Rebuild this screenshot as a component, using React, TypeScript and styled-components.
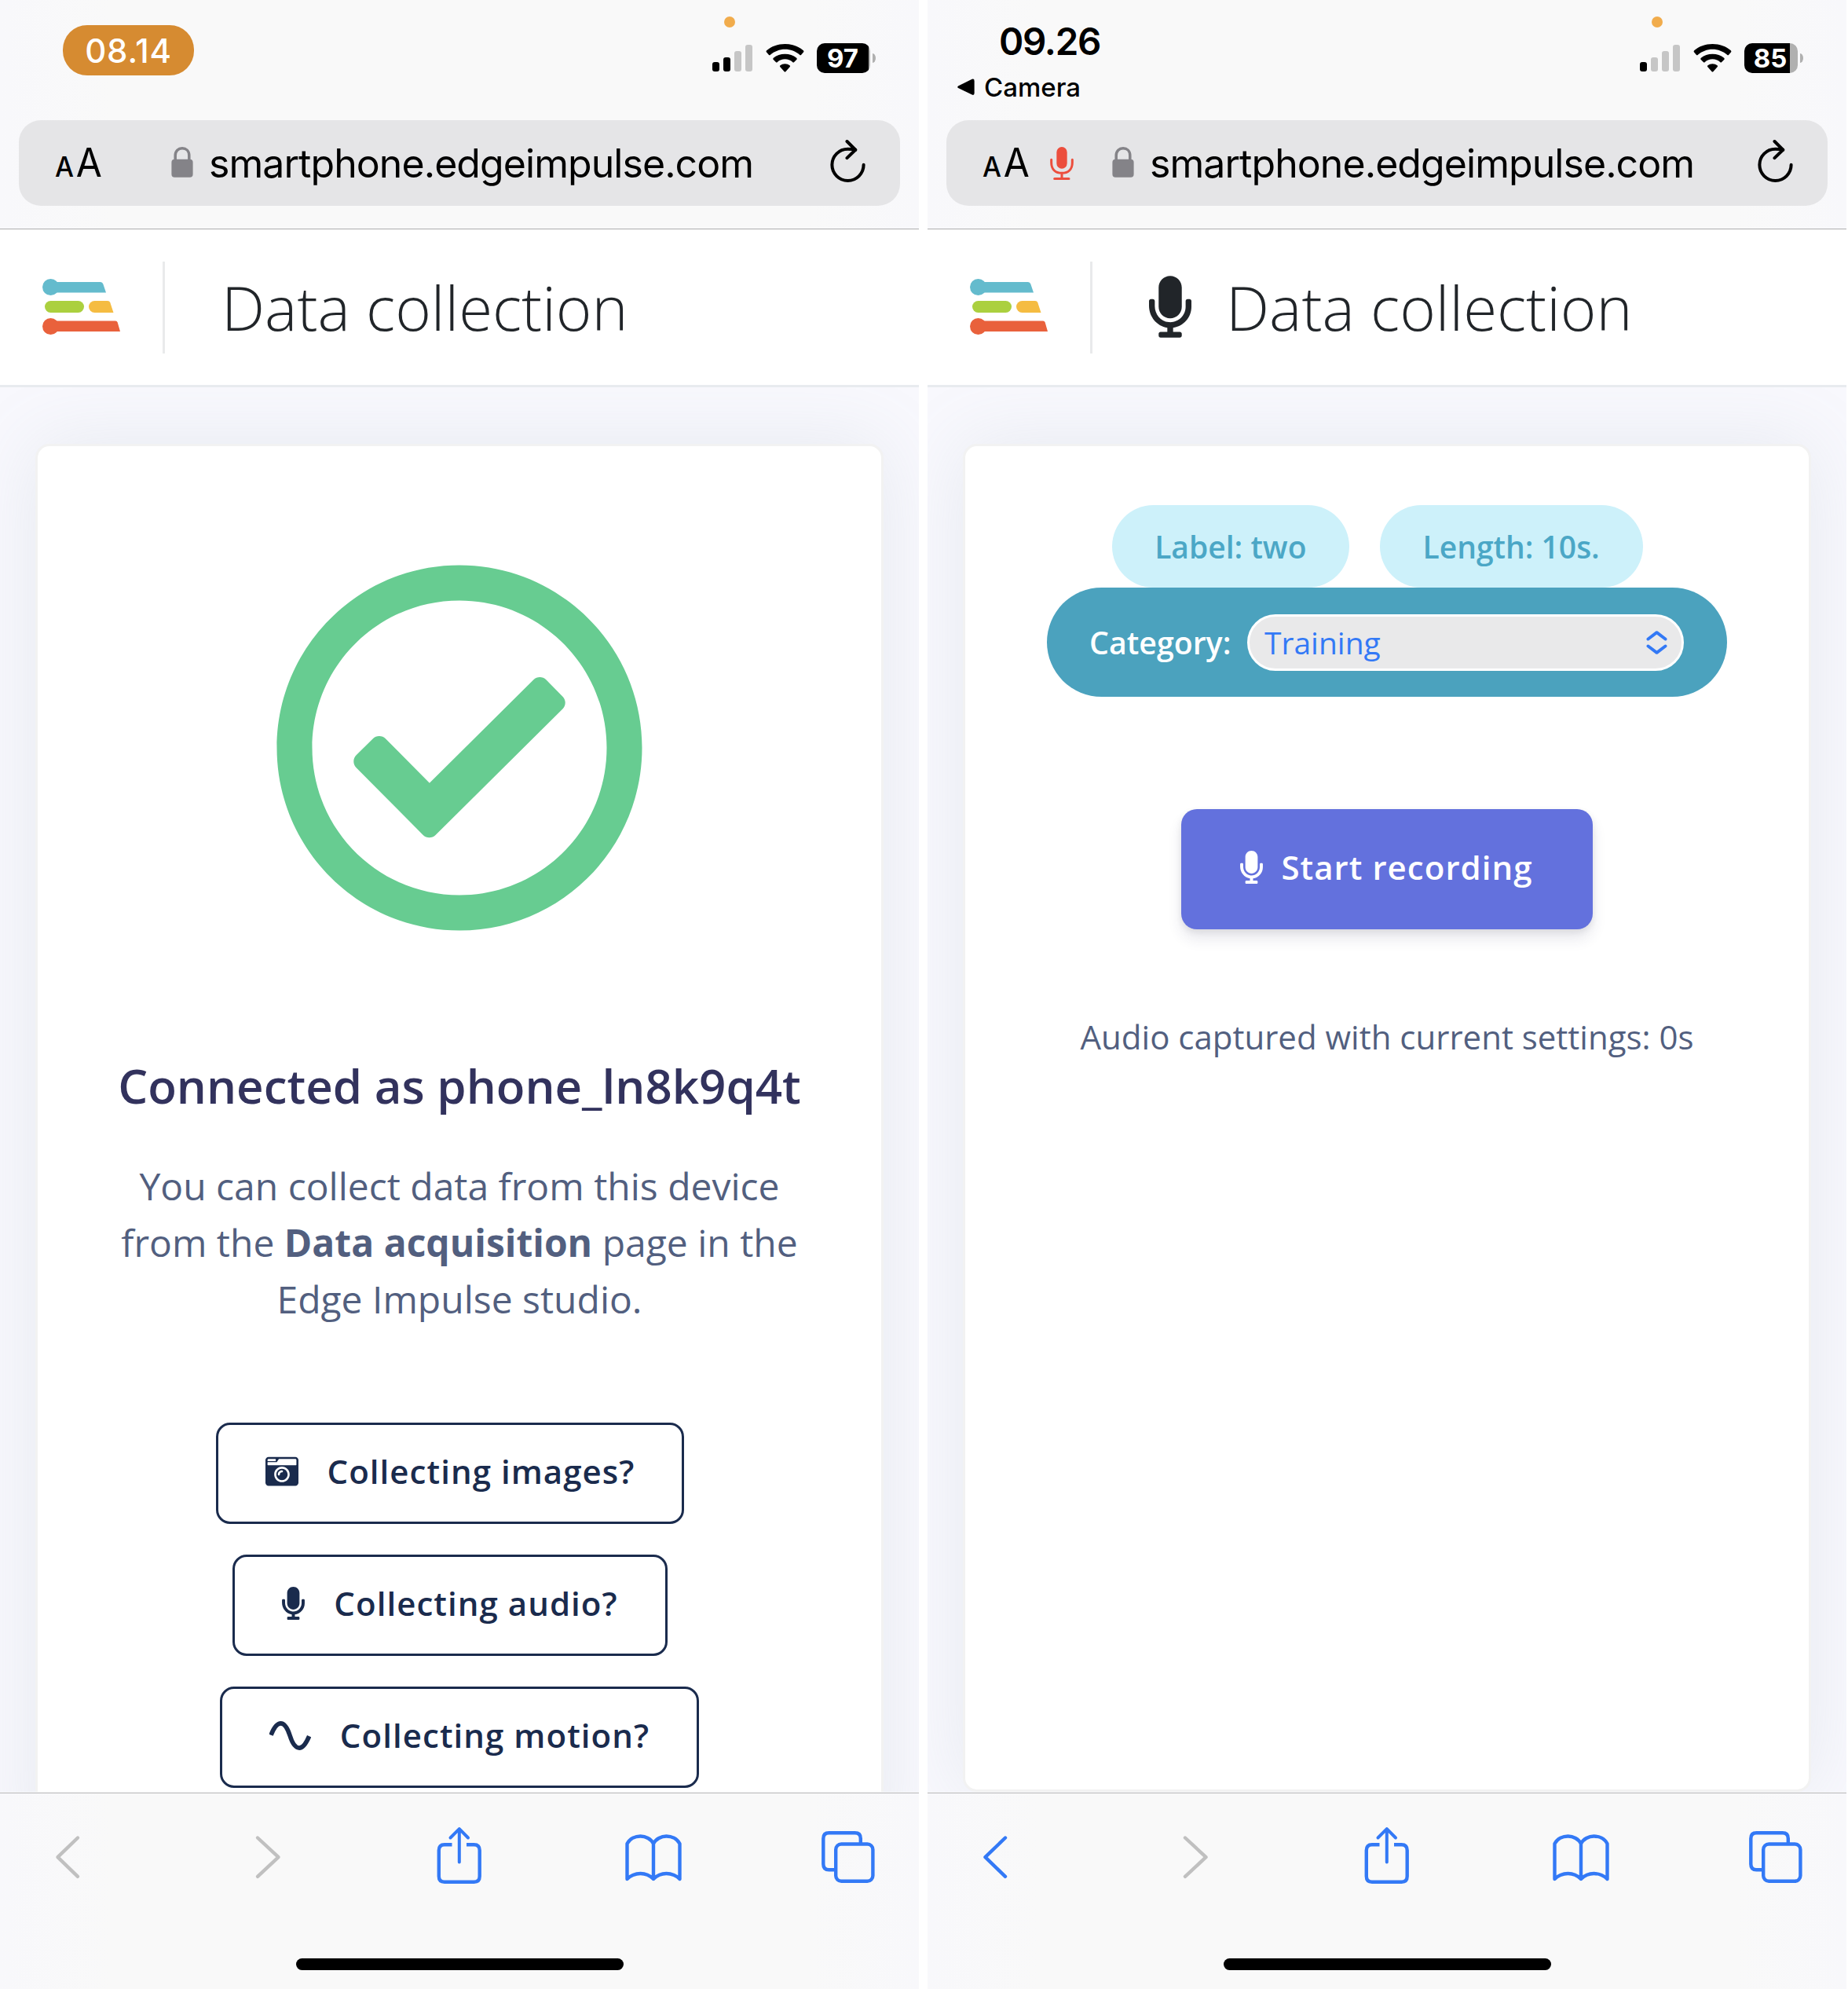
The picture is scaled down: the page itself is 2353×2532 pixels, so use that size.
import React from "react";
import styled, { createGlobalStyle } from "styled-components";
import { FaCameraRetro, FaMicrophone, FaRegCheckCircle } from "react-icons/fa";

const SYSTEM = `Inter, "Liberation Sans", sans-serif`;
const WEB = `"Open Sans", "Noto Sans", sans-serif`;
const BLUE = "#3379f6";
const NAVY = "#1a2b4d";

const GlobalStyle = createGlobalStyle`
  * { box-sizing: border-box; }
  body { margin: 0; background: #fff; }
  svg { display: block; flex: none; }
`;

const Screens = styled.div`
  display: flex;
  gap: 11px;
  width: 2353px;
  height: 2532px;
  overflow: hidden;
  background: #fff;
`;

const Phone = styled.section`
  display: flex;
  flex-direction: column;
  width: 1170px;
  height: 2532px;
  flex: none;
  overflow: hidden;
  background: linear-gradient(90deg, #f8f8fb 0, #f9f9f9 12%, #f9f9f9 88%, #f8f8fb 100%);
`;

/* ---------- browser chrome, top ---------- */

const TopChrome = styled.header`
  height: 292px;
  flex: none;
  padding: 0 24px;
  border-bottom: 1px solid #adadaf;
  font-family: ${SYSTEM};
  color: #000;
`;

const StatusBar = styled.div`
  display: flex;
  justify-content: space-between;
  height: 153px;
  padding: 0 31px 0 14px;
`;

const ClockPill = styled.div`
  display: flex;
  align-items: center;
  justify-content: center;
  width: 167px;
  height: 64px;
  margin: 32px 0 0 42px;
  border-radius: 31px;
  background: #d68b31;
  color: #fff;
  font-size: 42px;
  font-weight: 500;
  letter-spacing: 0.8px;
`;

const ClockColumn = styled.div`
  display: flex;
  flex-direction: column;
  padding-top: 23px;
`;

const Clock = styled.div`
  margin-left: 53px;
  font-size: 47.5px;
  font-weight: 600;
  line-height: 60px;
  letter-spacing: -1.3px;
`;

const BackToApp = styled.div`
  display: flex;
  align-items: center;
  gap: 12px;
  margin-top: 8px;
  font-size: 33px;
  font-weight: 500;
  line-height: 40px;
`;

const Indicators = styled.div`
  padding-top: 21px;
`;

const PrivacyDot = styled.div`
  width: 14px;
  height: 14px;
  margin-left: 15px;
  border-radius: 50%;
  background: #f1ac4c;
`;

const IndicatorRow = styled.div`
  display: flex;
  align-items: center;
  height: 38px;
  margin-top: 20px;
`;

const SignalBars = styled.div`
  display: flex;
  align-items: flex-end;
  gap: 5px;
  height: 34px;
  margin-right: 17px;
`;

const SignalBar = styled.i<{ $height: number; $on: boolean }>`
  width: 9px;
  height: ${(p) => p.$height}px;
  border-radius: 3px;
  background: ${(p) => (p.$on ? "#000" : "#c6c6c6")};
`;

const Battery = styled.div<{ $fill: number }>`
  display: flex;
  align-items: center;
  justify-content: center;
  width: 68px;
  height: 38px;
  margin-left: 16px;
  padding-right: 2px;
  border-radius: 10px;
  background: linear-gradient(90deg, #000 ${(p) => p.$fill}%, #b0b0b0 ${(p) => p.$fill}%);
  color: #fff;
  font-size: 33px;
  font-weight: 700;
  line-height: 38px;
`;

const BatteryTip = styled.div`
  width: 4px;
  height: 12px;
  margin-left: 3px;
  border-radius: 0 4px 4px 0 / 0 6px 6px 0;
  background: #b0b0b0;
`;

const AddressBar = styled.div`
  display: flex;
  align-items: center;
  height: 109px;
  padding: 0 44px 0 46px;
  border-radius: 28px;
  background: #e5e5e7;
`;

const TextSize = styled.div`
  display: flex;
  align-items: baseline;
  gap: 3px;
  width: 62px;
  padding-top: 4px;
  transform: scaleX(0.94);
  transform-origin: left;
  font-size: 51px;
  line-height: 60px;
`;

const SmallA = styled.span`
  font-size: 36px;
  font-weight: 500;
`;

const MicSlot = styled.div`
  margin-left: 24px;
`;

const Site = styled.div<{ $offset: number }>`
  display: flex;
  align-items: center;
  gap: 20px;
  flex: 1;
  margin-left: ${(p) => p.$offset}px;
  font-size: 50px;
  line-height: 60px;
  letter-spacing: -0.94px;
  white-space: nowrap;
`;

const LockSlot = styled.div`
  margin-top: -3px;
`;

const ReloadSlot = styled.div`
  margin-top: -5px;
`;

/* ---------- web page ---------- */

const PageHeader = styled.div`
  display: flex;
  align-items: center;
  height: 201px;
  flex: none;
  padding: 0 0 1px 54px;
  border-bottom: 3px solid #e8ebef;
  background: #fff;
`;

const HeaderRule = styled.div`
  width: 3px;
  height: 117px;
  margin: 1px 0 0 54px;
  background: #e9eaeb;
`;

const PageTitle = styled.h1`
  display: flex;
  align-items: center;
  gap: 44px;
  margin: 0 0 0 72px;
  font-family: ${WEB};
  font-size: 78px;
  font-weight: 300;
  line-height: 106px;
  color: #212529;
  white-space: nowrap;
`;

const MicGlyph = styled(FaMicrophone)<{ $height: number }>`
  width: ${(p) => Math.round(p.$height * 0.6875)}px;
  height: ${(p) => p.$height}px;
`;

const PageBody = styled.main`
  height: 1789px;
  flex: none;
  padding: 72px 45px 0;
  overflow: hidden;
  border-bottom: 1px solid #f7f7f8;
  background: #f8f8fd;
`;

const Card = styled.div<{ $height: number }>`
  display: flex;
  flex-direction: column;
  align-items: center;
  height: ${(p) => p.$height}px;
  border: 3px solid rgba(0, 0, 0, 0.05);
  border-radius: 18px;
  background: #fff;
  box-shadow: 0 0 96px 0 rgba(136, 152, 170, 0.15);
  font-family: ${WEB};
`;

const SuccessMark = styled.div`
  margin-top: 144px;
  color: #67cc91;
`;

const DeviceName = styled.h2`
  margin: 149px 0 0;
  font-size: 60px;
  font-weight: 600;
  line-height: 82px;
  color: #32325d;
  white-space: nowrap;
`;

const Lead = styled.p`
  margin: 51px 0 0;
  font-size: 48px;
  line-height: 72px;
  text-align: center;
  color: #525f7f;
  white-space: nowrap;

  b { font-weight: 700; }
`;

const CollectList = styled.div`
  display: flex;
  flex-direction: column;
  align-items: center;
  gap: 39px;
  margin-top: 121px;
`;

const ButtonText = styled.span`
  margin-top: -2px;
`;

const OutlineButton = styled.button<{ $trailing?: boolean }>`
  display: flex;
  align-items: center;
  gap: 37px;
  height: 129px;
  margin: 0 ${(p) => (p.$trailing ? 24 : 0)}px 0 0;
  padding: 0 60px 5px;
  border: 3px solid ${NAVY};
  border-radius: 18px;
  background: #fff;
  color: ${NAVY};
  font: 600 42px/63px ${WEB};
  letter-spacing: 1.05px;
  white-space: nowrap;
`;

const PillRow = styled.div`
  display: flex;
  gap: 39px;
  margin: 75px 24px 0 0;
`;

const Pill = styled.div`
  display: flex;
  align-items: center;
  height: 105px;
  padding: 0 55px 0 54px;
  border-radius: 53px;
  background: #cdf1fa;
  color: #4ba7c6;
  font-size: 39px;
  font-weight: 600;
  white-space: nowrap;
`;

const CategoryBar = styled.label`
  display: flex;
  align-items: center;
  justify-content: space-between;
  width: 866px;
  height: 139px;
  padding: 0 55px 0 54px;
  border-radius: 70px;
  background: #4ba2be;
  color: #fff;
  font-size: 39.3px;
  font-weight: 600;
`;

const Picker = styled.div`
  display: flex;
  align-items: center;
  justify-content: space-between;
  width: 556px;
  height: 72px;
  padding: 0 18px 0 19px;
  border: 3px solid #fff;
  border-radius: 36px;
  background: #e9e9ea;
  color: ${BLUE};
  font-size: 39px;
  font-weight: 400;
`;

const RecordButton = styled.button`
  display: flex;
  align-items: center;
  gap: 23px;
  height: 153px;
  margin: 143px 0 0;
  padding: 0 76px 5px 75px;
  border: 0;
  border-radius: 20px;
  background: #6371dd;
  box-shadow: 0 12px 18px rgba(50, 50, 93, 0.11), 0 3px 9px rgba(0, 0, 0, 0.08);
  color: #fff;
  font: 600 42px/63px ${WEB};
  letter-spacing: 1.05px;
  white-space: nowrap;
`;

const Captured = styled.p`
  margin: 105px 0 0;
  font-size: 42px;
  line-height: 63px;
  color: #525f7f;
  white-space: nowrap;
`;

/* ---------- browser chrome, bottom ---------- */

const BottomChrome = styled.footer`
  display: flex;
  flex-direction: column;
  align-items: center;
  flex: 1;
  border-top: 1px solid #b9b9bb;
`;

const Toolbar = styled.nav`
  display: grid;
  grid-template-columns: 172px 337px 152px 342px 154px;
  justify-items: center;
  align-items: center;
  width: 100%;
  height: 164px;
`;

const HomeBar = styled.div`
  width: 417px;
  height: 15px;
  margin-top: 46px;
  border-radius: 8px;
  background: #000;
`;

/* ---------- drawings ---------- */

const ToolIcon = ({ muted, children }: { muted?: boolean; children: React.ReactNode }) => (
  <svg
    width="84"
    height="84"
    viewBox="0 0 84 84"
    fill="none"
    stroke={muted ? "#c0c0c0" : BLUE}
    strokeWidth="4.4"
    strokeLinecap="round"
    strokeLinejoin="round"
  >
    {children}
  </svg>
);

const Wifi = () => (
  <svg width="49" height="36" viewBox="0 0 146 108">
    <path
      d="M2 31 Q0 28 3 25 C21 9 46 0 73 0 S125 9 143 25 Q146 28 144 31 L135 41 Q132 44 129 41 C114 28 94 20 73 20 S32 28 17 41 Q14 44 11 41 Z"
    />
    <path d="M28 59 Q26 56 29 53 C41 43 56 38 73 38 S105 43 117 53 Q120 56 118 59 L108 69 Q105 72 102 69 C94 62 84 58 73 58 S52 62 44 69 Q41 72 38 69 Z" />
    <path d="M54 87 Q52 84 55 82 C60 78 66 76 73 76 S86 78 91 82 Q94 84 92 87 L76 105 Q73 108 70 105 Z" />
  </svg>
);

const BackTriangle = () => (
  <svg width="22" height="22" viewBox="0 0 22 22">
    <path d="M1 9.4 L18.6 0.8 Q21.6 -0.2 21.6 3 V18.6 Q21.6 21.8 18.6 20.6 L1 12 Q-0.6 10.7 1 9.4Z" />
  </svg>
);

const Lock = () => (
  <svg width="28" height="39" viewBox="0 0 28 39">
    <path d="M5.2 17V11C5.2 5 9 1.8 14 1.8S22.8 5 22.8 11V17" fill="none" stroke="#848388" strokeWidth="3.5" />
    <rect x="0.4" y="15.8" width="27.2" height="23" rx="4" fill="#848388" />
  </svg>
);

const RedMic = () => (
  <svg width="30" height="42" viewBox="-1 0 90 126" fill="#ec4e3d">
    <rect x="24" y="0" width="40" height="83" rx="20" />
    <path
      d="M4 49V60C4 86 20 100 44 100S84 86 84 60V49M44 100V120M16 121.5H71"
      fill="none"
      stroke="#ec4e3d"
      strokeWidth="9"
      strokeLinecap="round"
    />
  </svg>
);

const Reload = () => (
  <svg width="45" height="54" viewBox="0 0 134 161" fill="none" stroke="#000" strokeWidth="12" strokeLinecap="round" strokeLinejoin="round">
    <path d="M127 95A60 60 0 1 1 67 35Q84 35 96 38" />
    <path d="M64 6L96 38L64 69" />
  </svg>
);

const Logo = () => (
  <svg width="99" height="71" viewBox="0 0 99 71">
    <g fill="#64bbcd">
      <circle cx="10.5" cy="10.5" r="10.5" />
      <path d="M10 4H74Q76.5 4 77.3 6.5L81 17.5H10Z" />
    </g>
    <rect x="3" y="28" width="50" height="15" rx="7.5" fill="#abd03f" />
    <path d="M66.5 28H83Q85.5 28 86.3 30.3L90.5 43H66.5A7.5 7.5 0 0 1 66.5 28Z" fill="#f5bc42" />
    <g fill="#e9613c">
      <circle cx="10.5" cy="60.5" r="10.5" />
      <path d="M10 53.5H93Q95 53.5 95.7 55.5L99 67H10Z" />
    </g>
  </svg>
);

const Wave = () => (
  <svg width="53" height="39" viewBox="69 1080 158 116">
    <path
      d="M75 1136C86 1108 98 1091.5 112 1091.5C128 1091.5 138 1110 147 1138C156 1167 166 1184.5 183 1184.5C197 1184.5 208 1168 220 1140"
      fill="none"
      stroke="currentColor"
      strokeWidth="17"
    />
  </svg>
);

const PickerArrows = () => (
  <svg width="27" height="30" viewBox="0 0 27 30" fill="none" stroke={BLUE} strokeWidth="4" strokeLinecap="round" strokeLinejoin="round">
    <path d="M2.5 10.5L13.5 2.2L24.5 10.5M2.5 19.5L13.5 27.8L24.5 19.5" />
  </svg>
);

/* ---------- composition ---------- */

type ScreenProps = {
  clock: React.ReactNode;
  signal: number;
  battery: number;
  fill: number;
  recording?: boolean;
  canGoBack?: boolean;
  cardHeight: number;
  children: React.ReactNode;
};

const Screen = ({ clock, signal, battery, fill, recording, canGoBack, cardHeight, children }: ScreenProps) => (
  <Phone>
    <TopChrome>
      <StatusBar>
        {clock}
        <Indicators>
          <PrivacyDot />
          <IndicatorRow>
            <SignalBars>
              {[12, 18, 26, 34].map((h, i) => (
                <SignalBar key={h} $height={h} $on={i < signal} />
              ))}
            </SignalBars>
            <Wifi />
            <Battery $fill={fill}>{battery}</Battery>
            <BatteryTip />
          </IndicatorRow>
        </Indicators>
      </StatusBar>
      <AddressBar>
        <TextSize>
          <SmallA>A</SmallA>A
        </TextSize>
        {recording && (
          <MicSlot>
            <RedMic />
          </MicSlot>
        )}
        <Site $offset={recording ? 49 : 86}>
          <LockSlot>
            <Lock />
          </LockSlot>
          smartphone.edgeimpulse.com
        </Site>
        <ReloadSlot>
          <Reload />
        </ReloadSlot>
      </AddressBar>
    </TopChrome>
    <PageHeader>
      <Logo />
      <HeaderRule />
      <PageTitle>
        {recording && <MicGlyph $height={79} />}
        Data collection
      </PageTitle>
    </PageHeader>
    <PageBody>
      <Card $height={cardHeight}>{children}</Card>
    </PageBody>
    <BottomChrome>
      <Toolbar>
        <ToolIcon muted={!canGoBack}>
          <path d="M55 16.5L29.5 41.2L55 65.8" />
        </ToolIcon>
        <ToolIcon muted>
          <path d="M29 16.5L55.5 41.2L29 65.8" />
        </ToolIcon>
        <ToolIcon>
          <path d="M32.5 25.2H23Q15.8 25.2 15.8 32.5V65.5Q15.8 72.7 23 72.7H60.5Q67.7 72.7 67.7 65.5V32.5Q67.7 25.2 60.5 25.2H51" strokeLinecap="butt" />
          <path d="M41.8 47.5V5.5M30.5 16.5L41.8 5.2L53 16.5" strokeWidth="4" />
        </ToolIcon>
        <ToolIcon>
          <path d="M42 24C39 18 32 14.5 25.5 14.5S12 17.5 8.5 24V69C12 65 19 62 25.5 62S38 65 42 69C46 65 52 62 58.5 62S72 65 75.5 69V24C72 17.5 65 14.5 58.5 14.5S45 18 42 24V69" />
        </ToolIcon>
        <ToolIcon>
          <path d="M57.8 24V17.5Q57.8 10.3 50.6 10.3H17.5Q10.3 10.3 10.3 17.5V50Q10.3 57.3 17.5 57.3H26" strokeLinecap="butt" />
          <rect x="26.2" y="24.5" width="47.2" height="47.3" rx="7" />
        </ToolIcon>
      </Toolbar>
      <HomeBar />
    </BottomChrome>
  </Phone>
);

export default function App() {
  return (
    <>
      <GlobalStyle />
      <Screens>
        <Screen clock={<ClockPill>08.14</ClockPill>} signal={2} battery={97} fill={97} cardHeight={1800}>
          <SuccessMark>
            <FaRegCheckCircle size={480} />
          </SuccessMark>
          <DeviceName>Connected as phone_ln8k9q4t</DeviceName>
          <Lead>
            You can collect data from this device
            <br />
            from the <b>Data acquisition</b> page in the
            <br />
            Edge Impulse studio.
          </Lead>
          <CollectList>
            <OutlineButton $trailing>
              <FaCameraRetro size={42} />
              <ButtonText>Collecting images?</ButtonText>
            </OutlineButton>
            <OutlineButton $trailing>
              <MicGlyph $height={42} />
              <ButtonText>Collecting audio?</ButtonText>
            </OutlineButton>
            <OutlineButton>
              <Wave />
              <ButtonText>Collecting motion?</ButtonText>
            </OutlineButton>
          </CollectList>
        </Screen>
        <Screen
          clock={
            <ClockColumn>
              <Clock>09.26</Clock>
              <BackToApp>
                <BackTriangle />
                Camera
              </BackToApp>
            </ClockColumn>
          }
          signal={1}
          battery={85}
          fill={85}
          recording
          canGoBack
          cardHeight={1716}
        >
          <PillRow>
            <Pill>Label: two</Pill>
            <Pill>Length: 10s.</Pill>
          </PillRow>
          <CategoryBar>
            Category:
            <Picker>
              Training
              <PickerArrows />
            </Picker>
          </CategoryBar>
          <RecordButton>
            <MicGlyph $height={42} />
            <ButtonText>Start recording</ButtonText>
          </RecordButton>
          <Captured>Audio captured with current settings: 0s</Captured>
        </Screen>
      </Screens>
    </>
  );
}
